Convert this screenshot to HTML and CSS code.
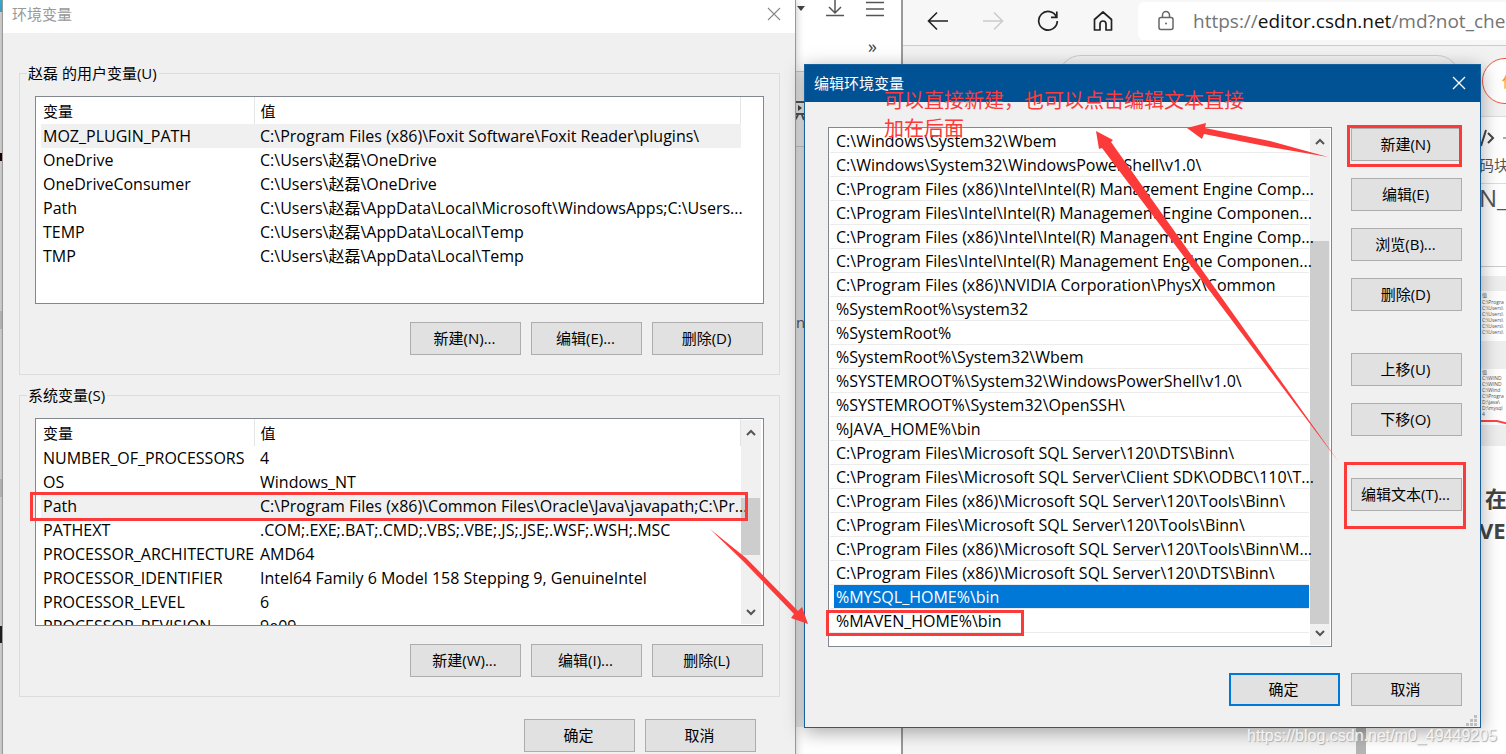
FILE: index.html
```html
<!DOCTYPE html>
<html lang="zh-CN">
<head>
<meta charset="utf-8">
<title>环境变量</title>
<link rel="stylesheet" href="styles.css">
</head>
<body>
<main class="desktop">

  <div class="backdrop" aria-hidden="true">
    <span class="chip cyan"></span>
    <span class="chip dark"></span>
    <span class="chip band"></span>
    <span class="chip band"></span>
    <span class="chip black"></span>
  </div>

  <section class="reader" aria-label="Foxit Reader">
    <div class="reader-top">
      <div class="reader-icons">
        <svg class="caret" width="8" height="5" viewBox="0 0 8 5"><path d="M0 0h8L4 5z" fill="#444"/></svg>
        <svg width="20" height="18" viewBox="0 0 20 18" fill="none" stroke="#555" stroke-width="1.5"><path d="M10 0v13M4 7l6 6 6-6M1 15.500h18"/></svg>
        <svg width="20" height="18" viewBox="0 0 20 18" fill="none" stroke="#555" stroke-width="1.5"><path d="M1 2.5h18M1 9h18M1 15.5h18"/></svg>
      </div>
      <span class="more">»</span>
    </div>
    <div class="reader-bar">
      <svg width="10" height="20" viewBox="0 0 10 20"><path d="M0 1h10M0 13h10M3 14l-3 5M7 14l2 5" stroke="#555" stroke-width="2" fill="none"/><path d="M3 4v6l4-3z" fill="#444"/></svg>
    </div>
    <div class="reader-page"><span>n</span></div>
  </section>

  <section class="browser" aria-label="浏览器">
    <div class="browser-bar">
      <button class="nav" aria-label="后退"><svg width="22" height="22" viewBox="0 0 22 22" fill="none" stroke="#222" stroke-width="1.6"><path d="M21 11H2M10 2.500L1.500 11l8.500 8.500"/></svg></button>
      <button class="nav" aria-label="前进"><svg width="22" height="22" viewBox="0 0 22 22" fill="none" stroke="#ccc" stroke-width="1.600"><path d="M1 11h19M12 2.500l8.500 8.500-8.500 8.500"/></svg></button>
      <button class="nav" aria-label="刷新"><svg width="22" height="22" viewBox="0 0 22 22" fill="none" stroke="#222" stroke-width="1.700"><path d="M19.500 7A9.300 9.300 0 1 0 20.300 11M19.800 1.500V7.300H14"/></svg></button>
      <button class="nav" aria-label="主页"><svg width="22" height="22" viewBox="0 0 22 22" fill="none" stroke="#222" stroke-width="1.700" stroke-linejoin="round"><path d="M2.500 9.500L11 2l8.500 7.500V20H14v-6a3 3 0 0 0-6 0v6H2.500z"/></svg></button>
      <div class="address">
        <svg width="18" height="22" viewBox="0 0 18 22" fill="none" stroke="#666" stroke-width="1.500"><rect x="2" y="7.500" width="14" height="12" rx="2"/><path d="M5.500 7.500V5a3.500 3.500 0 0 1 7 0v2.500"/><circle cx="9" cy="13.500" r="1" fill="#666" stroke="none"/></svg>
        <span class="url">https://<b>editor.csdn.net</b>/md?not_chec</span>
      </div>
    </div>
    <div class="page-head">
      <div class="title-field"></div>
      <button class="publish">保</button>
    </div>
    <div class="page-tools">
      <svg width="30" height="22" viewBox="0 0 30 22" fill="none" stroke="#444" stroke-width="2"><path d="M7 4L2 20M9 7l5 5-5 5"/><path d="M24 12h6" stroke="#aaa"/></svg>
      <span>码块</span>
    </div>
    <div class="page-body">
      <p class="doc-title">N_</p>
      <svg class="thumb" width="100%" height="170" font-size="5" font-family="Open Sans, Noto Sans CJK SC, sans-serif">
        <rect width="100%" height="170" fill="#eee"/>
        <rect y="15" width="100%" height="50" fill="#fff"/>
        <rect y="93" width="100%" height="56" fill="#fff"/>
        <g fill="#555">
          <text x="3" y="21">值</text><text x="3" y="28">C:\Progra</text><text x="3" y="34">C:\Users\</text><text x="3" y="40">C:\Users\</text><text x="3" y="46">C:\Users\</text><text x="3" y="52">C:\Users\</text><text x="3" y="58">C:\Users\</text>
          <text x="3" y="98">值</text><text x="3" y="104">C:\WIND</text><text x="3" y="110">C:\WIND</text><text x="3" y="116">C:\Wind</text><text x="3" y="122">C:\Progra</text><text x="3" y="128">D:\java\</text><text x="3" y="134">D:\mysql</text><text x="3" y="140">4</text>
        </g>
        <path d="M0 145h18l12 3" stroke="#f44" stroke-width="2" fill="none"/>
      </svg>
      <div class="doc-heading"><span>在</span><span class="latin">VEN</span></div>
    </div>
    <div class="page-scroll"></div>
  </section>

  <section class="window vars" aria-label="环境变量">
    <header class="titlebar">
      <h1>环境变量</h1>
      <button class="close" aria-label="关闭"><svg width="14" height="14" viewBox="0 0 14 14" stroke="#888" stroke-width="1.100"><path d="M1 1l12 12M13 1L1 13"/></svg></button>
    </header>
    <div class="vars-body">
      <fieldset class="group">
        <legend>赵磊 的用户变量(U)</legend>
        <div class="listbox">
          <table class="grid">
            <thead><tr><th class="name">变量</th><th>值</th></tr></thead>
            <tbody>
              <tr class="current"><td>MOZ_PLUGIN_PATH</td><td>C:\Program Files (x86)\Foxit Software\Foxit Reader\plugins\</td></tr>
              <tr><td>OneDrive</td><td>C:\Users\赵磊\OneDrive</td></tr>
              <tr><td>OneDriveConsumer</td><td>C:\Users\赵磊\OneDrive</td></tr>
              <tr><td>Path</td><td>C:\Users\赵磊\AppData\Local\Microsoft\WindowsApps;C:\Users...</td></tr>
              <tr><td>TEMP</td><td>C:\Users\赵磊\AppData\Local\Temp</td></tr>
              <tr><td>TMP</td><td>C:\Users\赵磊\AppData\Local\Temp</td></tr>
            </tbody>
          </table>
        </div>
        <div class="actions">
          <button class="btn">新建(N)...</button>
          <button class="btn">编辑(E)...</button>
          <button class="btn">删除(D)</button>
        </div>
      </fieldset>
      <fieldset class="group">
        <legend>系统变量(S)</legend>
        <div class="listbox">
          <table class="grid">
            <thead><tr><th class="name">变量</th><th>值</th></tr></thead>
            <tbody>
              <tr><td>NUMBER_OF_PROCESSORS</td><td>4</td></tr>
              <tr><td>OS</td><td>Windows_NT</td></tr>
              <tr class="current"><td>Path</td><td>C:\Program Files (x86)\Common Files\Oracle\Java\javapath;C:\Pr...</td></tr>
              <tr><td>PATHEXT</td><td>.COM;.EXE;.BAT;.CMD;.VBS;.VBE;.JS;.JSE;.WSF;.WSH;.MSC</td></tr>
              <tr><td>PROCESSOR_ARCHITECTURE</td><td>AMD64</td></tr>
              <tr><td>PROCESSOR_IDENTIFIER</td><td>Intel64 Family 6 Model 158 Stepping 9, GenuineIntel</td></tr>
              <tr><td>PROCESSOR_LEVEL</td><td>6</td></tr>
              <tr><td>PROCESSOR_REVISION</td><td>9e09</td></tr>
            </tbody>
          </table>
          <div class="scroll sys-scroll" aria-hidden="true">
            <svg class="arrow" width="10" height="7" viewBox="0 0 10 7"><path d="M1 6l4-4 4 4"/></svg>
            <div class="track"><div class="thumb-bar"></div></div>
            <svg class="arrow" width="10" height="7" viewBox="0 0 10 7"><path d="M1 1l4 4 4-4"/></svg>
          </div>
        </div>
        <div class="actions">
          <button class="btn">新建(W)...</button>
          <button class="btn">编辑(I)...</button>
          <button class="btn">删除(L)</button>
        </div>
      </fieldset>
      <footer class="confirm">
        <button class="btn">确定</button>
        <button class="btn">取消</button>
      </footer>
    </div>
  </section>

  <section class="window edit" aria-label="编辑环境变量">
    <header class="titlebar blue">
      <h2>编辑环境变量</h2>
      <button class="close" aria-label="关闭"><svg width="14" height="14" viewBox="0 0 14 14" stroke="#fff" stroke-width="1.300"><path d="M1 1l12 12M13 1L1 13"/></svg></button>
    </header>
    <div class="edit-body">
      <div class="listbox paths">
        <ul class="path-list">
          <li>C:\Windows\System32\Wbem</li>
          <li>C:\Windows\System32\WindowsPowerShell\v1.0\</li>
          <li>C:\Program Files (x86)\Intel\Intel(R) Management Engine Comp...</li>
          <li>C:\Program Files\Intel\Intel(R) Management Engine Componen...</li>
          <li>C:\Program Files (x86)\Intel\Intel(R) Management Engine Comp...</li>
          <li>C:\Program Files\Intel\Intel(R) Management Engine Componen...</li>
          <li>C:\Program Files (x86)\NVIDIA Corporation\PhysX\Common</li>
          <li>%SystemRoot%\system32</li>
          <li>%SystemRoot%</li>
          <li>%SystemRoot%\System32\Wbem</li>
          <li>%SYSTEMROOT%\System32\WindowsPowerShell\v1.0\</li>
          <li>%SYSTEMROOT%\System32\OpenSSH\</li>
          <li>%JAVA_HOME%\bin</li>
          <li>C:\Program Files\Microsoft SQL Server\120\DTS\Binn\</li>
          <li>C:\Program Files\Microsoft SQL Server\Client SDK\ODBC\110\T...</li>
          <li>C:\Program Files (x86)\Microsoft SQL Server\120\Tools\Binn\</li>
          <li>C:\Program Files\Microsoft SQL Server\120\Tools\Binn\</li>
          <li>C:\Program Files (x86)\Microsoft SQL Server\120\Tools\Binn\M...</li>
          <li>C:\Program Files (x86)\Microsoft SQL Server\120\DTS\Binn\</li>
          <li class="selected"><span>%MYSQL_HOME%\bin</span></li>
          <li>%MAVEN_HOME%\bin</li>
        </ul>
        <div class="scroll path-scroll" aria-hidden="true">
          <svg class="arrow" width="10" height="7" viewBox="0 0 10 7"><path d="M1 6l4-4 4 4"/></svg>
          <div class="track"><div class="thumb-bar"></div></div>
          <svg class="arrow" width="10" height="7" viewBox="0 0 10 7"><path d="M1 1l4 4 4-4"/></svg>
        </div>
      </div>
      <div class="side">
        <button class="btn">新建(N)</button>
        <button class="btn">编辑(E)</button>
        <button class="btn">浏览(B)...</button>
        <button class="btn">删除(D)</button>
        <button class="btn spaced">上移(U)</button>
        <button class="btn">下移(O)</button>
        <button class="btn spaced">编辑文本(T)...</button>
      </div>
    </div>
    <footer class="confirm">
      <button class="btn default">确定</button>
      <button class="btn">取消</button>
    </footer>
    <svg class="grip" width="11" height="11" viewBox="0 0 11 11" fill="#bfbfbf"><path d="M8 0h3v3H8zM4 4h3v3H4zM8 4h3v3H8zM0 8h3v3H0zM4 8h3v3H4zM8 8h3v3H8z"/></svg>
  </section>

  <svg class="marks" aria-hidden="true">
    <g fill="none" stroke="#fd3a3a" stroke-width="3">
      <path d="M31.500 493.500h715v26h-715z"/>
      <path d="M827.500 611.500h195v23h-195z"/>
      <path d="M1348.500 126.500h112v39h-112z"/>
      <path d="M1345.500 463.500h119v64h-119z"/>
    </g>
    <g fill="#fd3a3a">
      <path d="M710 529L746 558 798 611 802 607 808 624 791 618 794 614 744 562z"/>
      <path d="M1328 157L1270 141 1205 128 1206 123 1187 128 1202 139 1204 134 1270 147z"/>
      <path d="M1338 461L1111 142 1113 140 1096 131 1099 149 1102 148z"/>
    </g>
  </svg>
  <p class="note">可以直接新建，也可以点击编辑文本直接<br>加在后面</p>
  <p class="watermark">https://blog.csdn.net/m0_49449205</p>
</main>
</body>
</html>
```
FILE: styles.css
```css
* { box-sizing: border-box; }

body {
  margin: 0;
  font: 15px/22px "Open Sans", "Noto Sans CJK SC", sans-serif;
  color: #000;
}

h1, h2, p, ul { margin: 0; padding: 0; font-weight: 400; }

button { font: inherit; color: inherit; }

.desktop {
  position: relative;
  height: 100vh;
  overflow: hidden;
  background: #fff;
}

/* Slice of the window behind, at the left edge */
.backdrop {
  position: absolute;
  inset: 0 auto 0 0;
  width: 3px;
  display: flex;
  flex-direction: column;
  background: #dedede;
}
.chip { display: block; height: 12px; }
.chip.cyan { background: #35b4dc; }
.chip.dark { margin-top: 141px; height: 8px; background: #200; }
.chip.band { margin-top: 150px; height: 18px; background: #c4c4c4; }
.chip.black { margin-top: 129px; height: 17px; background: #222; }

/* Reader window */
.reader {
  position: absolute;
  inset: 0 auto 0 795px;
  width: 108px;
  display: flex;
  flex-direction: column;
  background: #fff;
  border-right: 2px solid #999;
}
.reader-top { height: 72px; border-bottom: 1px solid #ccc; }
.reader-icons { display: flex; gap: 20px; padding-left: 2px; }
.reader-icons .caret { margin: 6px 0 0; }
.more { display: block; padding: 17px 24px 0 0; text-align: right; font-size: 18px; color: #444; }
.reader-bar { height: 75px; padding-top: 29px; background: #eee; border-bottom: 1px solid #c8c8c8; }
.reader-page { height: 580px; padding: 164px 0 0 1px; background: #ececec; color: #555; }

/* Browser window */
.browser {
  position: absolute;
  inset: 0 0 0 903px;
  display: flex;
  flex-direction: column;
  background: #fff;
  overflow: hidden;
}
.browser-bar {
  display: flex;
  align-items: center;
  gap: 33px;
  height: 46px;
  padding: 0 0 4px 24px;
  background: #f7f7f7;
  border-bottom: 1px solid #ccc;
}
.nav { display: flex; padding: 0; border: 0; background: none; }
.address {
  flex: 1;
  display: flex;
  align-items: center;
  gap: 18px;
  height: 38px;
  margin-left: -9px;
  padding-left: 19px;
  min-width: 0;
  border-radius: 6px 0 0 6px;
  background: #fff;
  overflow: hidden;
}
.address svg { flex: none; }
.url { font-size: 19px; color: #757575; white-space: nowrap; }
.url b { font-weight: 400; color: #111; }
.page-head {
  flex: none;
  display: flex;
  gap: 22px;
  height: 71px;
  padding: 9px 0 0 155px;
  background: #f2f2f2;
  border-bottom: 1px solid #ddd;
}
.title-field { flex: none; width: 402px; height: 46px; border: 1px solid #ccc; border-radius: 23px; }
.publish {
  flex: none;
  width: 110px;
  height: 46px;
  margin-top: 3px;
  padding-left: 19px;
  border: 1px solid #f0553a;
  border-radius: 23px;
  background: #fff;
  color: #fc8a3c;
  text-align: left;
}
.page-tools {
  display: flex;
  flex-direction: column;
  gap: 6px;
  height: 67px;
  padding: 9px 0 0 576px;
  border-bottom: 1px solid #ddd;
  color: #555;
  white-space: nowrap;
}
.page-body { padding-left: 576px; }
.doc-title { height: 83px; padding-top: 3px; border-bottom: 1px solid #ccc; font-size: 24px; color: #555; }
.thumb { display: block; margin-top: 9px; }
.doc-heading { display: flex; flex-direction: column; padding-top: 36px; font-size: 22px; line-height: 32px; font-weight: 700; color: #444; }
.doc-heading span { padding-left: 6px; }
.doc-heading .latin { padding: 0; }
.page-scroll { flex: 1; margin-right: 140px; background: #f5f5f5; border-right: 10px solid #b5b5b5; }

/* Windows */
.window { position: absolute; isolation: isolate; background: #f0f0f0; }
.vars {
  top: 0;
  left: 3px;
  width: 792px;
  min-height: 100%;
  box-shadow: 0 0 0 1px #999, 0 0 9px rgba(0, 0, 0, .3);
}
.titlebar {
  display: flex;
  align-items: center;
  justify-content: space-between;
  height: 33px;
  padding: 0 14px 5px 9px;
  background: #fff;
  color: #999;
}
.titlebar h1, .titlebar h2 { font-size: 15px; }
.titlebar.blue { height: 37px; padding: 0 14px 1px 9px; background: #005294; color: #fff; }
.close { display: flex; padding: 0; border: 0; background: none; }

.vars-body { padding: 29px 15px 0 16px; }
.group { margin: 0 0 9px; padding: 12px 15px 19px; border: 1px solid #dcdcdc; min-width: 0; }
.group legend { margin-left: -8px; padding: 0 2px 0 1px; }

.listbox {
  display: flex;
  justify-content: space-between;
  height: 208px;
  padding: 0 2px 0 5px;
  border: 1px solid #828790;
  background: #fff;
  font-size: 16px;
  overflow: hidden;
}
.grid { position: relative; z-index: 1; align-self: flex-start; width: 700px; table-layout: fixed; border-collapse: collapse; }
.grid th, .grid td { height: 24px; padding: 0 0 0 6px; text-align: left; white-space: nowrap; line-height: 24px; font-weight: 400; }
.grid th { height: 27px; font-size: 15px; border-right: 1px solid #e5e5e5; }
.grid .name { width: 213px; }
.grid th:first-child, .grid td:first-child { padding-left: 2px; }
.grid .current { background: #f0f0f0; }

.scroll { flex: none; display: flex; flex-direction: column; align-items: center; width: 20px; padding: 9px 0 8px; background: #f0f0f0; margin: 1px 0; }
.arrow { fill: none; stroke: #555; stroke-width: 2; }
.track { flex: 1; width: 100%; }
.thumb-bar { width: 19px; background: #cdcdcd; }
.sys-scroll .thumb-bar { margin-top: 62px; height: 57px; }
.path-scroll .thumb-bar { margin-top: 96px; height: 383px; }

.btn {
  width: 111px;
  height: 33px;
  padding: 0 2px 2px 0;
  border: 1px solid #adadad;
  background: #e1e1e1;
}
.btn.default { border: 2px solid #0078d7; }
.actions, .confirm { display: flex; justify-content: flex-end; gap: 10px; }
.actions { padding: 18px 1px 0 0; }
.vars .confirm { padding: 13px 24px 24px 0; }

.edit {
  top: 64px;
  left: 804px;
  width: 677px;
  border: 1px solid #17609e;
  box-shadow: 0 4px 18px rgba(0, 0, 0, .35);
}
.edit-body { display: flex; gap: 19px; padding: 25px 18px 0 23px; }
.paths { flex: 1; height: 520px; padding: 1px; min-width: 0; }
.path-list { position: relative; z-index: 1; flex: 1; min-width: 0; list-style: none; }
.path-list li { height: 24px; padding-left: 6px; border-bottom: 1px solid #ececec; line-height: 24px; white-space: nowrap; }
.path-list .selected { padding-left: 4px; }
.selected span { display: block; height: 23px; padding-left: 2px; background: #0078d7; color: #fff; }
.path-scroll { margin: 0 0 0 1px; }
.side { display: flex; flex-direction: column; gap: 17px; padding-top: 1px; }
.side .spaced { margin-top: 25px; }
.edit .confirm { padding: 26px 18px 21px 0; gap: 11px; }
.grip { position: absolute; right: 3px; bottom: 1px; }

/* Annotations over the windows */
.marks { position: absolute; inset: 0; width: 100%; height: 100%; pointer-events: none; }
.note {
  position: absolute;
  top: 86px;
  left: 884px;
  font-family: "Noto Sans CJK SC", sans-serif;
  font-size: 20px;
  line-height: 28px;
  color: #fd3a3a;
  white-space: nowrap;
}
.watermark {
  position: absolute;
  right: 9px;
  bottom: 7px;
  font-family: "Liberation Sans", sans-serif;
  font-size: 16px;
  color: #f4f4f4;
  text-shadow: 1px 1px 1px #aaa;
}
```
